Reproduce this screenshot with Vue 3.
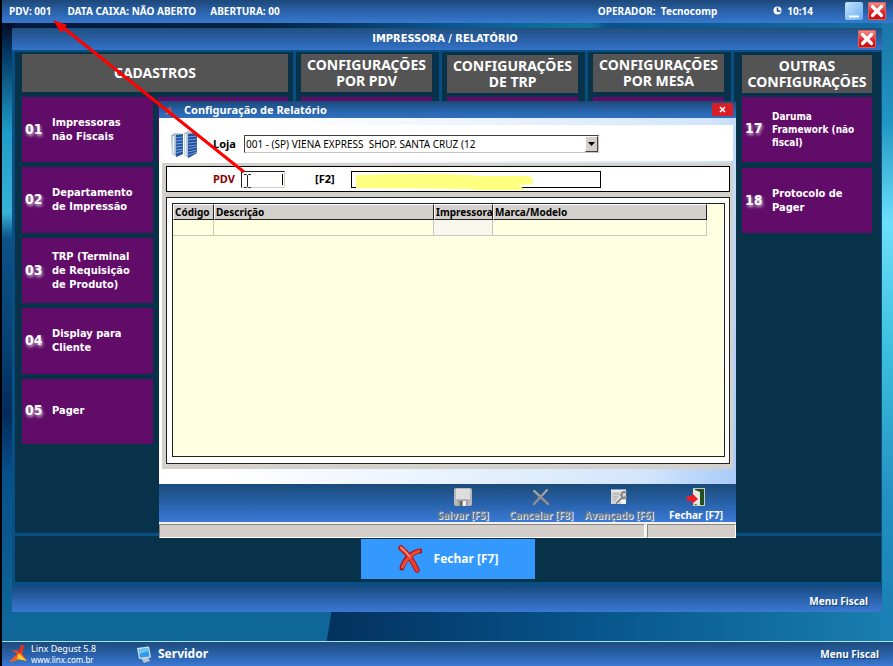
<script setup>
import { ref } from 'vue'

const cadastros = [
  { n: '01', label: 'Impressoras não Fiscais' },
  { n: '02', label: 'Departamento de Impressão' },
  { n: '03', label: 'TRP (Terminal de Requisição de Produto)' },
  { n: '04', label: 'Display para Cliente' },
  { n: '05', label: 'Pager' },
]
const outras = [
  { n: '17', label: 'Daruma Framework (não fiscal)', tight: true },
  { n: '18', label: 'Protocolo de Pager' },
]
const middle = [
  { title: 'CONFIGURAÇÕES POR PDV', low: false },
  { title: 'CONFIGURAÇÕES DE TRP', low: true },
  { title: 'CONFIGURAÇÕES POR MESA', low: false },
]
const loja = ref('001')
const pdv = ref('')
const pdvNome = ref('')
</script>

<template>
  <div class="screen">
    <header class="topbar">
      <span class="t-pdv">PDV: 001</span>
      <span class="t-data">DATA CAIXA: NÃO ABERTO</span>
      <span>ABERTURA: 00</span>
      <span class="t-op">OPERADOR:&nbsp; Tecnocomp</span>
      <span class="t-clock">
        <svg width="9" height="9" viewBox="0 0 9 9"><circle cx="4.500" cy="4.500" r="4" fill="#fff" /><path d="M4.500 1.500V5H7.500" fill="none" stroke="#1d4d86" stroke-width="1.500" /></svg>
        10:14
      </span>
      <button class="sysbtn min" aria-label="Minimizar"><svg width="18" height="18" viewBox="0 0 18 18"><path d="M4 14.500H14" stroke="#fff" stroke-width="2" /></svg></button>
      <button class="sysbtn close" aria-label="Sair"><svg width="18" height="18" viewBox="0 0 18 18"><path d="M4.500 4.500L13.500 13.500M13.500 4.500L4.500 13.500" stroke="#fff" stroke-width="3.200" stroke-linecap="round" /></svg></button>
    </header>

    <div class="desktop">
      <svg class="wall" viewBox="0 0 330 30" preserveAspectRatio="none"><path d="M0 0H330L325 30H0Z" fill="#0e6798" /></svg>
      <main class="window">
        <div class="wintitle">
          <h1>IMPRESSORA / RELATÓRIO</h1>
          <button class="sysbtn close" aria-label="Fechar janela"><svg width="18" height="18" viewBox="0 0 18 18"><path d="M4.500 4.500L13.500 13.500M13.500 4.500L4.500 13.500" stroke="#fff" stroke-width="3.200" stroke-linecap="round" /></svg></button>
        </div>
        <div class="frame">
          <div class="columns">
            <section class="col first">
              <h2>CADASTROS</h2>
              <div class="pair">
                <div class="stack full">
                  <button v-for="t in cadastros" :key="t.n" class="tile"><span class="num">{{ t.n }}</span><span class="lbl">{{ t.label }}</span></button>
                </div>
                <div class="stack"><div class="tile"></div></div>
              </div>
            </section>
            <section v-for="m in middle" :key="m.title" class="col">
              <h2 :class="{ low: m.low }">{{ m.title }}</h2>
              <div class="stack"><div class="tile"></div></div>
            </section>
            <section class="col last">
              <h2 class="low">OUTRAS CONFIGURAÇÕES</h2>
              <div class="stack">
                <button v-for="t in outras" :key="t.n" class="tile" :class="{ tight: t.tight }"><span class="num">{{ t.n }}</span><span class="lbl">{{ t.label }}</span></button>
              </div>
            </section>
          </div>
          <div class="actions">
            <button class="bigclose">
              <svg width="24" height="28" viewBox="0 0 24 28">
                <path d="M4 23C6 15 14 7 22 6" fill="none" stroke="#a81010" stroke-width="5" stroke-linecap="round" />
                <path d="M3 3C9 8 15 16 19 25" fill="none" stroke="#a81010" stroke-width="5.500" stroke-linecap="round" />
                <path d="M4.500 22C7 15 14 8 21 6" fill="none" stroke="#f04a38" stroke-width="3.200" stroke-linecap="round" />
                <path d="M3 3C9 8 15 16 19 25" fill="none" stroke="#ee3b2b" stroke-width="3.600" stroke-linecap="round" />
                <path d="M3 2.500C7 6 10 9 12 12" fill="none" stroke="#ff9c86" stroke-width="1.500" stroke-linecap="round" />
              </svg>
              Fechar [F7]
            </button>
          </div>
        </div>
        <div class="winfoot"><a href="#">Menu Fiscal</a></div>
      </main>
    </div>

    <footer class="taskbar">
      <svg width="18" height="18" viewBox="0 0 18 18">
        <path d="M12 0L15 0L13 9L18 16L11 14L6 13L9 9L2 5L10 6Z" fill="#ff4a1c" />
        <path d="M12 0L15 0L12 8L9 8Z" fill="#e8281c" />
        <path d="M9 8L0 17L7 16L12 12Z" fill="#f5601e" />
        <path d="M10 8L18 16L8 14Z" fill="#ffc928" />
      </svg>
      <div class="brand"><span>Linx Degust 5.8</span><span class="url">www.linx.com.br</span></div>
      <svg class="pc" width="16" height="17" viewBox="0 0 16 17">
        <path d="M5 12L12 11L14 15L8 17Z" fill="#b9c3cb" />
        <path d="M1 2L13 0.500L15 11.500L3 13Z" fill="#d5e4ee" />
        <path d="M2.500 3.200L12 2L13.500 10.500L4 11.800Z" fill="#2d9be6" />
        <path d="M2.500 3.200L12 2L12.500 5L3.500 8Z" fill="#6cc4f7" />
      </svg>
      <span class="srv">Servidor</span>
      <a href="#">Menu Fiscal</a>
    </footer>

    <div class="dialog" role="dialog" aria-label="Configuração de Relatório">
      <div class="dtitle">
        <svg width="10" height="12" viewBox="0 0 10 12"><path d="M6 1L7 6L10 11L5 9L1 4L5 5Z" fill="#e0503c" /><path d="M5 6L1 11L6 9Z" fill="#e58a3e" /></svg>
        <span>Configuração de Relatório</span>
        <button aria-label="Fechar diálogo"><svg width="7" height="7" viewBox="0 0 7 7"><path d="M1 1L6 6M6 1L1 6" stroke="#fff" stroke-width="1.600" /></svg></button>
      </div>
      <div class="dbody">
        <div class="store">
          <svg width="27" height="29" viewBox="0 0 27 29">
            <path d="M0 5L4 3L12 4V24L6 27L1 24Z" fill="#a9bccf" /><path d="M5 5L12 4V24L5 27Z" fill="#2856a0" />
            <path d="M13 3L17 1L26 3V23L18 28L13 25Z" fill="#b3c4d5" /><path d="M17 4L26 3V23L17 28Z" fill="#244e9a" />
            <path d="M5 8L12 7M5 11L12 10M5 14L12 13M5 17L12 16M5 20L12 19M5 23L12 21M17 7L26 6M17 10L26 9M17 13L26 12M17 16L26 15M17 19L26 17M17 22L26 20M17 25L26 22" stroke="#6fa2dc" stroke-width="1" />
            <path d="M2.500 6V24M14.500 4V25" stroke="#eef4fa" stroke-width="1.500" />
          </svg>
          <label for="loja">Loja</label>
          <div class="combo">
            <select id="loja" v-model="loja"><option value="001">001 - (SP) VIENA EXPRESS&nbsp; SHOP. SANTA CRUZ (12</option></select>
            <span class="arrow"><svg width="7" height="4" viewBox="0 0 7 4"><path d="M0 0H7L3.500 4Z" fill="#000" /></svg></span>
          </div>
        </div>
        <div class="panel">
          <div class="pdvbox">
            <label for="pdv">PDV</label>
            <div class="pdvfield">
              <input id="pdv" v-model="pdv" type="text">
              <svg width="7" height="14" viewBox="0 0 7 14"><path d="M0 0.500H2.500L3.500 1.500L4.500 0.500H7M3.500 1.500V12.500M0 13.500H2.500L3.500 12.500L4.500 13.500H7" fill="none" stroke="#222" /></svg>
              <i></i>
            </div>
            <label class="f2" for="nome">[F2]</label>
            <div class="namefield">
              <input id="nome" v-model="pdvNome" type="text">
              <svg width="178" height="18" viewBox="0 0 178 18"><path d="M0 3Q60 1 116 3L122 4H172Q178 5 177 12L163 13L169 18Q140 19 120 18L112 17L0 16Z" fill="#ffff80" /></svg>
            </div>
          </div>
          <div class="gridbox">
            <div class="gridarea">
              <table>
                <colgroup><col class="c1"><col class="c2"><col class="c3"><col></colgroup>
                <thead><tr><th>Código</th><th>Descrição</th><th>Impressora</th><th>Marca/Modelo</th></tr></thead>
                <tbody><tr><td></td><td></td><td class="cur"></td><td></td></tr></tbody>
              </table>
            </div>
          </div>
        </div>
      </div>
      <div class="tools">
        <button class="tool w1" disabled>
          <svg width="18" height="18" viewBox="0 0 18 18"><rect width="18" height="18" rx="2" fill="#b9b9b9" /><rect x="2" y="1" width="14" height="10" fill="#dedede" /><rect x="4" y="12" width="10" height="6" fill="#a0a0a0" /><rect x="9" y="13" width="3" height="5" fill="#f2f2f2" /><rect x="6" y="13" width="2" height="5" fill="#666" /></svg>
          Salvar [F5]
        </button>
        <button class="tool w2" disabled>
          <svg width="18" height="18" viewBox="0 0 18 18"><path d="M2 3L16 16M15 2L2 16" stroke="#8f8f8f" stroke-width="2.400" stroke-linecap="round" /><path d="M2 2L8 8M15 2L10 8" stroke="#b8b8b8" stroke-width="1" /></svg>
          Cancelar [F8]
        </button>
        <button class="tool w3" disabled>
          <svg width="18" height="18" viewBox="0 0 18 18"><rect x="1" y="2" width="15" height="14" fill="#d2d2d2" /><path d="M3 6H9M3 9H8M3 12H7" stroke="#aaa" /><path d="M1 2.500H16" stroke="#eee" stroke-width="2" /><path d="M6 15L12 9" stroke="#fff" stroke-width="3" /><path d="M6 15.500L12 9.500M17 4L13 4L11 7L13 10L17 9" fill="none" stroke="#858585" stroke-width="2" /><rect x="11" y="12" width="5" height="4" fill="#f4f4f4" /></svg>
          Avançado [F6]
        </button>
        <button class="tool w4">
          <svg width="18" height="18" viewBox="0 0 18 18"><rect x="6" y="0" width="12" height="18" fill="#c8c9b8" /><rect x="8" y="1" width="9" height="16" fill="#23501e" /><path d="M6 1L13 4V18L6 15Z" fill="#e6e9e2" /><path d="M0 8H5V5L11 11L5 16V13H0Z" fill="#ee1c24" /></svg>
          Fechar [F7]
        </button>
      </div>
      <div class="status"><div></div><div></div></div>
    </div>

    <svg class="pointer" width="194" height="156" viewBox="0 0 194 156">
      <path d="M192 152L8 5" stroke="#ff0000" stroke-width="3" />
      <path d="M1 0L15 5L9 13Z" fill="#ff0000" />
    </svg>
  </div>
</template>

<style>
html, body { margin: 0; }
</style>
<style scoped>
* { box-sizing: border-box; }
.screen { position: relative; display: flex; flex-direction: column; min-height: 100vh; border-left: 2px solid #000; font: bold 11px/14px "Noto Sans", "DejaVu Sans Condensed", sans-serif; color: #fff; overflow: hidden; }
button { font: inherit; color: inherit; border: 0; padding: 0; margin: 0; }
a { color: #fff; text-decoration: none; text-shadow: 1px 1px 1px #123a6e; }
h1, h2 { margin: 0; font-weight: bold; }
svg { display: block; flex: none; }

.topbar { display: flex; align-items: center; height: 23px; padding: 0 7px 2px 7px; font-size: 10px; background: linear-gradient(#1d4878, #2c67b4 60%, #3878cc); white-space: nowrap; }
.t-pdv { margin-right: 16px; }
.t-data { margin-right: 14px; }
.t-op { margin-left: auto; margin-right: 56px; }
.t-clock { display: flex; align-items: center; gap: 5px; margin-right: 32px; }
.sysbtn { display: flex; align-items: center; justify-content: center; width: 18px; height: 18px; border-radius: 2px; }
.sysbtn.min { background: linear-gradient(135deg, #c4e4fb, #68adf0); margin-right: 5px; }
.sysbtn.close { background: linear-gradient(#f09a90, #e01c20 60%, #c40c10); box-shadow: 0 0 0 1px #d8605c inset; }

.desktop { position: relative; flex: 1; display: flex; padding: 5px 11px 29px 10px;
  background:
    linear-gradient(#050d22 0, #043764 30px, #1f9cc8 110px, #38b2d6 190px, #0c5288 215px, #074072 330px, #042a5a 390px, #07508a 450px, #0b5c90 540px, #0e6798 600px) left / 12px 100% no-repeat,
    linear-gradient(#1a76a8 0, #2296c4 100px, #6ce0fa 200px, #3cbede 330px, #2491c2 470px, #1a7fb4 600px) right / 12px 100% no-repeat,
    linear-gradient(90deg, #03193a 0, #032444 30%, #0a5590 50%, #10769e 66%, #09508a 68%, #156fa4 100%) top / 100% 6px no-repeat,
    linear-gradient(90deg, #04325f 0, #04325f 37%, #06538a 65%, #1a7fb0 100%); }
.wall { position: absolute; left: 0; bottom: 0; width: 37%; height: 30px; }
.window { position: relative; flex: 1; display: flex; flex-direction: column; }
.wintitle { display: flex; align-items: center; height: 22px; padding-right: 6px; background: linear-gradient(#21507f, #2b62ac 60%, #3573c8); }
.wintitle h1 { flex: 1; padding-left: 20px; text-align: center; font-family: "DejaVu Sans Condensed", "Noto Sans", sans-serif; font-size: 11px; }
.frame { flex: 1; display: flex; flex-direction: column; gap: 3px; padding: 2px 1px 4px 3px; background: #085084; }
.columns { flex: 1; display: grid; grid-template-columns: 278fr 143fr 143fr 143fr 147fr; gap: 3px; }
.col { padding: 2px 7px 0 5px; background: #08324a; min-width: 0; }
.col.first { padding: 2px 5px 0 7px; }
.col.last { padding: 2px 9px 0 8px; }
.col h2 { display: flex; align-items: center; justify-content: center; height: 38px; margin-bottom: 5px; background: #545454; font-size: 14px; line-height: 16px; text-align: center; }
.col h2.low { position: relative; top: 1px; }
.pair { display: grid; grid-template-columns: 1fr 1fr; gap: 5px; align-items: start; }
.stack { display: flex; flex-direction: column; gap: 5px; }
.stack.full { height: 347px; }
.stack.full .tile { flex: 1; }
.last .stack { gap: 6px; }
.tile { display: flex; align-items: center; gap: 8px; height: 65px; padding: 0 14px 0 3px; background: #620c6a; text-align: left; font-family: "DejaVu Sans Condensed", "Noto Sans", sans-serif; font-size: 11px; line-height: 14px; }
.last .tile { padding-right: 6px; }
.tile.tight { font-size: 10px; line-height: 13px; }
.num { width: 19px; padding-bottom: 2px; font-size: 14px; text-shadow: 1px 2px 3px #c8b4cc; }
.lbl { flex: 1; }
.actions { display: flex; justify-content: center; height: 46px; padding: 3px 0; background: #08324a; }
.bigclose { display: flex; align-items: center; justify-content: center; gap: 12px; width: 174px; background: #3399ff; font-size: 12px; }
.winfoot { display: flex; align-items: center; justify-content: flex-end; height: 26px; padding: 3px 14px 0 0; font-size: 10px; background: linear-gradient(#16497e, #2b62ac 50%, #3a78d2); }

.taskbar { display: flex; align-items: center; height: 25px; padding: 0 14px 0 7px; font-size: 10px; border-top: 1px solid #a8e4e4; background: linear-gradient(#1c4c7c, #2b62ac 55%, #3a78d2); }
.brand { display: flex; flex-direction: column; margin-left: 4px; width: 105px; font-size: 9px; font-weight: normal; line-height: 12px; }
.brand span { height: 11px; }
.url { font-size: 8px; }
.pc { margin-right: 6px; }
.srv { flex: 1; font-size: 12px; }

.dialog { position: absolute; top: 101px; left: 157px; right: 157px; bottom: 128px; display: flex; flex-direction: column; color: #000; }
.dtitle { display: flex; align-items: center; height: 17px; padding: 0 3px 0 5px; color: #fff; background: linear-gradient(#1c4a78, #2a68b4 70%, #2f70be); }
.dtitle span { flex: 1; margin-left: 10px; }
.dtitle button { display: flex; align-items: center; justify-content: center; width: 21px; height: 13px; background: #d81e26; }
.dbody { flex: 1; display: flex; flex-direction: column; padding: 7px 3px 15px; background: linear-gradient(100deg, #fff 20%, #d4e6fc 85%, #a9cbf8); }
.store { display: flex; align-items: center; height: 36px; padding: 2px 0 0 9px; background: #fff; }
.store label { width: 31px; margin-left: 15px; }
.combo { position: relative; display: flex; width: 355px; height: 18px; border: 1px solid #404040; border-color: #404040 #c8c4bc #c8c4bc #404040; }
.combo select { flex: 1; appearance: none; border: 0; padding: 0 1px; background: #fff; font: 10px/14px "Noto Sans", "DejaVu Sans Condensed", sans-serif; color: #000; }
.arrow { position: absolute; right: 0; top: 0; display: flex; align-items: center; justify-content: center; width: 13px; height: 16px; background: #d4d0c8; border: 1px solid; border-color: #fff #404040 #404040 #fff; pointer-events: none; }
.panel { flex: 1; display: flex; flex-direction: column; gap: 5px; margin-top: 2px; padding: 3px 3px 5px 4px; background: #d4d0cb; }
.pdvbox { display: flex; align-items: center; height: 26px; padding-left: 46px; border: 1px solid #000; background: #fff; }
.pdvbox label { width: 28px; color: #8b0000; }
.pdvbox .f2 { width: 36px; margin-left: 30px; color: #000; }
.pdvfield { position: relative; width: 44px; height: 17px; }
.pdvfield input, .namefield input { display: block; width: 100%; height: 100%; border: 1px solid #000; padding: 0; background: #fff; outline: 0; }
.pdvfield input { border-color: #222 #d4d0c8 #d4d0c8 #222; }
.pdvfield svg { position: absolute; left: 3px; top: 3px; }
.pdvfield i { position: absolute; right: 2px; top: 3px; width: 1px; height: 11px; background: #000; }
.namefield { position: relative; width: 250px; height: 17px; }
.namefield svg { position: absolute; left: 5px; top: 1px; }
.gridbox { flex: 1; display: flex; padding: 5px 4px 6px 5px; border: 1px solid #222; background: #fff; }
.gridarea { flex: 1; border: 1px solid #222; background: #ffffe1; }
table { width: 534px; max-width: 100%; border-collapse: separate; border-spacing: 0; table-layout: fixed; font-size: 10px; }
.c1 { width: 41px; } .c2 { width: 220px; } .c3 { width: 59px; }
th { height: 16px; padding: 0 1px; overflow: hidden; text-align: left; line-height: 13px; white-space: nowrap; background: #d4d0cb; border: 1px solid; border-color: #fff #222 #222 #fff; }
td { height: 16px; padding: 0; border: solid #c8c8c0; border-width: 0 1px 1px 0; }
td.cur { background: #f8f7ee; }
.tools { display: flex; justify-content: flex-end; height: 38px; padding: 4px 8px 0 0; background: linear-gradient(#1a4a78, #2a64ae 55%, #3a7ad6); }
.tool { display: flex; flex-direction: column; align-items: center; gap: 2px; width: 78px; background: none; color: #fff; font-size: 10px; line-height: 14px; white-space: nowrap; }
.tool:disabled { color: #76808c; text-shadow: 1px 1px 0 #e4e8ee; }
.tool.w4 { width: 64px; margin-left: 6px; }
.status { display: flex; gap: 2px; height: 16px; padding-top: 2px; background: #f4f2ee; }
.status div { flex: 1; background: #d4ceca; border: 1px solid; border-color: #8a8680 #fff #fff #8a8680; }
.status div:last-child { flex: none; width: 89px; }
.pointer { position: absolute; left: 50px; top: 20px; pointer-events: none; }
</style>
